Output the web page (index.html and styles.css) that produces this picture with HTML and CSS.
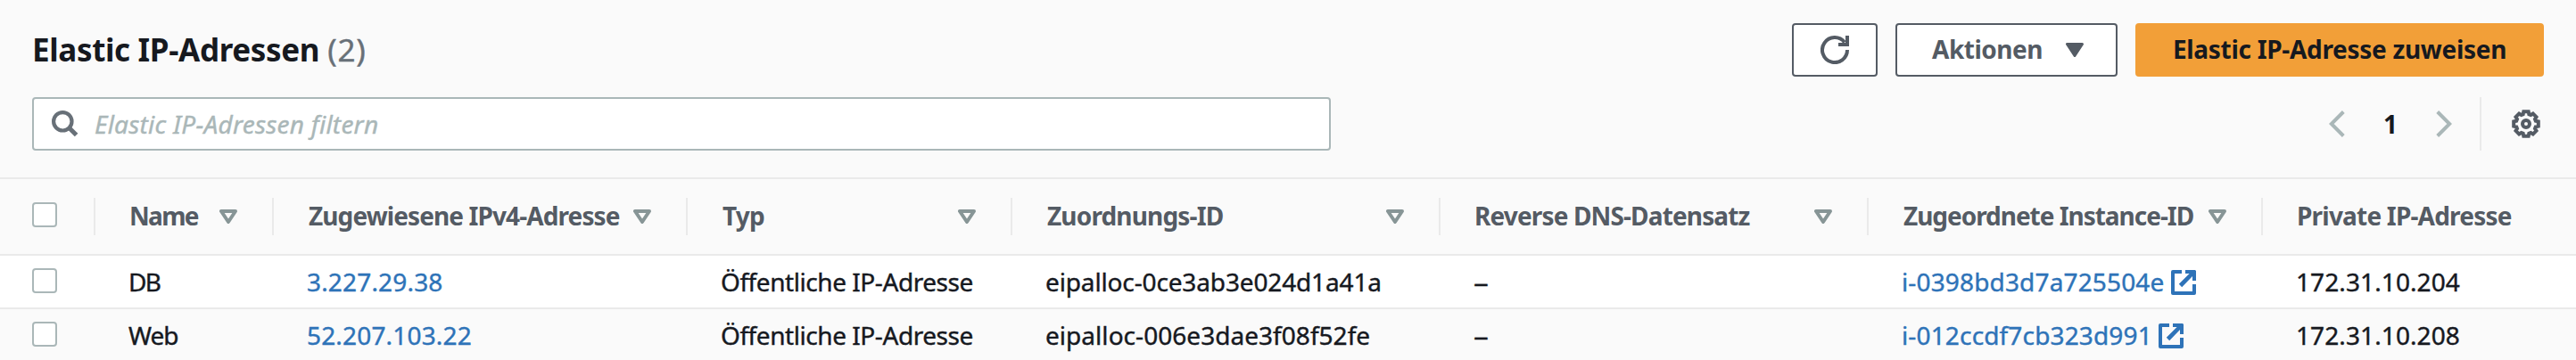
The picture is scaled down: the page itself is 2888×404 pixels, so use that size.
FILE: index.html
```html
<!DOCTYPE html>
<html lang="de">
<head>
<meta charset="utf-8">
<title>Elastic IP-Adressen</title>
<link rel="stylesheet" href="styles.css">
</head>
<body>
<svg class="defs" aria-hidden="true">
  <symbol id="sort" viewBox="0 0 20 16"><path d="M2 2H18L10 14Z" fill="none" stroke="currentColor" stroke-width="4" stroke-linejoin="round"/></symbol>
  <symbol id="external" viewBox="0 0 28 28"><path d="M12 2H2V26H26V16" fill="none" stroke="currentColor" stroke-width="4" stroke-linejoin="round"/><path d="M16 0H27L28 1V12H24V7L12.2 19.2L8.8 15.8L20.6 4H16Z" fill="currentColor"/></symbol>
</svg>
<header class="panel-head">
  <div class="title-row">
    <h1 class="title"><span class="title-text">Elastic IP-Adressen</span><span class="count">(2)</span></h1>
    <div class="actions">
      <button class="btn btn-refresh" aria-label="Aktualisieren"><svg width="32" height="32" viewBox="0 0 32 32" fill="none" stroke="currentColor" stroke-width="4"><path d="M30 16A14 14 0 1 1 27 7.4"/><path d="M30 0V10H20"/></svg></button>
      <button class="btn btn-menu"><span class="menu-text">Aktionen</span><svg width="20" height="16" viewBox="0 0 20 16"><path d="M1.5 1.5H18.5L10 14.5Z" fill="currentColor" stroke="currentColor" stroke-width="3" stroke-linejoin="round"/></svg></button>
      <button class="btn btn-primary"><span class="primary-text">Elastic IP-Adresse zuweisen</span></button>
    </div>
  </div>
  <div class="filter-row">
    <div class="search">
      <svg width="30" height="30" viewBox="0 0 30 30" fill="none" stroke="currentColor"><circle cx="12.3" cy="12.3" r="10.2" stroke-width="4.2"/><path d="M19 19L27.6 27.6" stroke-width="5"/></svg>
      <span class="placeholder">Elastic IP-Adressen filtern</span>
    </div>
    <div class="pager">
      <svg class="arrow" width="18" height="30" viewBox="0 0 18 30"><path d="M16.3 1.5L2.8 15L16.3 28.5" fill="none" stroke="currentColor" stroke-width="4"/></svg>
      <span class="page">1</span>
      <svg class="arrow" width="18" height="30" viewBox="0 0 18 30"><path d="M1.7 1.5L15.2 15L1.7 28.5" fill="none" stroke="currentColor" stroke-width="4"/></svg>
      <span class="divider"></span>
      <svg width="32" height="32" viewBox="-16 -16 32 32" fill="none" stroke="currentColor" stroke-width="4"><path d="M-3.3-10.8L-2.7-13.8L2.7-13.8L3.3-10.8L5.3-10L7.8-11.5L11.5-7.8L10-5.3L10.8-3.3L13.8-2.7L13.8 2.7L10.8 3.3L10 5.3L11.5 7.8L7.8 11.5L5.3 10L3.3 10.8L2.7 13.8L-2.7 13.8L-3.3 10.8L-5.3 10L-7.8 11.5L-11.5 7.8L-10 5.3L-10.8 3.3L-13.8 2.7L-13.8-2.7L-10.8-3.3L-10-5.3L-11.5-7.8L-7.8-11.5L-5.3-10Z"/><circle r="4"/></svg>
    </div>
  </div>
</header>
<main class="table">
  <div class="row head">
    <div class="select"><span class="check"></span></div>
    <div class="th"><span class="h-name">Name</span><svg class="sort"><use href="#sort"/></svg></div>
    <div class="th"><span class="h-ipv4">Zugewiesene IPv4-Adresse</span><svg class="sort"><use href="#sort"/></svg></div>
    <div class="th"><span class="h-type">Typ</span><svg class="sort"><use href="#sort"/></svg></div>
    <div class="th"><span class="h-alloc">Zuordnungs-ID</span><svg class="sort"><use href="#sort"/></svg></div>
    <div class="th"><span class="h-dns">Reverse DNS-Datensatz</span><svg class="sort"><use href="#sort"/></svg></div>
    <div class="th"><span class="h-inst">Zugeordnete Instance-ID</span><svg class="sort"><use href="#sort"/></svg></div>
    <div class="th"><span class="h-priv">Private IP-Adresse</span></div>
  </div>
  <div class="row">
    <div class="select"><span class="check"></span></div>
    <div class="td c-name">DB</div>
    <div class="td c-ip"><a class="link">3.227.29.38</a></div>
    <div class="td c-type">Öffentliche IP-Adresse</div>
    <div class="td c-alloc">eipalloc-0ce3ab3e024d1a41a</div>
    <div class="td"><span class="dash">–</span></div>
    <div class="td c-inst"><a class="link">i-0398bd3d7a725504e</a><svg class="external"><use href="#external"/></svg></div>
    <div class="td c-priv">172.31.10.204</div>
  </div>
  <div class="row alt">
    <div class="select"><span class="check"></span></div>
    <div class="td c-name-b">Web</div>
    <div class="td c-ip"><a class="link">52.207.103.22</a></div>
    <div class="td c-type">Öffentliche IP-Adresse</div>
    <div class="td c-alloc-b">eipalloc-006e3dae3f08f52fe</div>
    <div class="td"><span class="dash">–</span></div>
    <div class="td c-inst c-inst-b"><a class="link">i-012ccdf7cb323d991</a><svg class="external"><use href="#external"/></svg></div>
    <div class="td c-priv">172.31.10.208</div>
  </div>
</main>
</body>
</html>
```
FILE: styles.css
```css
* { box-sizing: border-box; }
body {
  margin: 0;
  height: 404px;
  overflow: hidden;
  background: #fafafa;
  color: #16191f;
  font: 28px/58px "Noto Sans", "Open Sans", sans-serif;
  white-space: nowrap;
}
svg { display: block; flex: none; }
.defs { display: none; }

.panel-head {
  display: flex;
  flex-direction: column;
  gap: 23px;
  height: 201px;
  padding: 26px 36px 0;
  border-bottom: 2px solid #eaeaea;
}
.title-row, .filter-row { display: flex; justify-content: space-between; height: 60px; }
.title { margin: 0; display: flex; gap: 9px; font-size: 35px; line-height: 59px; }
.title-text { letter-spacing: -.35px; }
.count { font-weight: 400; color: #687078; letter-spacing: .8px; -webkit-text-stroke: .4px; }

.actions { display: flex; gap: 20px; }
.btn {
  display: flex;
  align-items: center;
  justify-content: center;
  height: 60px;
  padding: 0;
  border: 2px solid #545b64;
  border-radius: 4px;
  background: #fff;
  color: #545b64;
  font: bold 28px/54px "Noto Sans", "Open Sans", sans-serif;
}
.btn-refresh { width: 96px; }
.btn-menu { width: 249px; gap: 26px; padding-left: 3px; }
.btn-primary { width: 458px; border-color: #f29f38; background: #f29f38; color: #16191f; }
.menu-text { letter-spacing: -.5px; padding-bottom: 2px; }
.primary-text { letter-spacing: -.3px; padding-bottom: 2px; }

.search {
  display: flex;
  align-items: center;
  gap: 18px;
  width: 1456px;
  padding-left: 20px;
  border: 2px solid #aab7b8;
  border-radius: 4px;
  background: #fff;
  color: #687078;
}
.placeholder { font-style: italic; color: #aab7b8; letter-spacing: .24px; line-height: 56px; -webkit-text-stroke: .4px; }
.pager { display: flex; align-items: center; margin-right: 4px; color: #545b64; }
.arrow { color: #aab7b8; }
.page { width: 102px; text-align: center; font-weight: 700; color: #16191f; }
.divider { width: 2px; height: 60px; margin: 0 34px 0 31px; background: #eaeaea; }

.row {
  display: grid;
  grid-template-columns: 105px 200px 464px 364px 480px 480px 442px 353px;
  height: 60px;
  background: #fff;
  border-bottom: 2px solid #eaeaea;
}
.row.head { height: 86px; padding-top: 12px; background: transparent; }
.row.alt { background: #fafafa; border-bottom: 0; }
.select { padding: 14px 0 0 36px; }
.check { display: block; width: 28px; height: 28px; border: 2px solid #aab7b8; border-radius: 4px; background: #fff; }
.th {
  display: flex;
  align-items: center;
  justify-content: space-between;
  height: 42px;
  margin-top: 9px;
  padding: 0 39px 0 38px;
  border-left: 2px solid #eaeaea;
  font-weight: 700;
  line-height: 40px;
  color: #545b64;
}
.th span { padding-bottom: 2px; }
.h-name { letter-spacing: -1.7px; }
.h-ipv4 { letter-spacing: -.9px; padding-left: 1px; }
.h-type { letter-spacing: -.8px; padding-left: 1px; }
.h-alloc { letter-spacing: -.84px; padding-left: 1px; }
.h-dns { letter-spacing: -.86px; }
.h-inst { letter-spacing: -1.03px; padding-left: 1px; }
.h-priv { letter-spacing: -.8px; }
.sort { width: 20px; height: 16px; color: #879596; }

.td { display: flex; padding-left: 39px; line-height: 58px; -webkit-text-stroke: .4px; }
.link { color: #2e73b8; }
.c-name { letter-spacing: -1.6px; }
.c-name-b { letter-spacing: -1px; }
.c-ip { letter-spacing: .17px; }
.c-type { letter-spacing: -.44px; }
.c-alloc { letter-spacing: -.14px; }
.c-alloc-b { letter-spacing: .04px; }
.c-inst { gap: 8px; letter-spacing: .15px; }
.c-inst-b { gap: 7px; }
.c-priv { letter-spacing: .1px; }
.dash { transform: scaleX(1.2); transform-origin: left; }
.external { width: 28px; height: 28px; margin-top: 16px; color: #2e73b8; }
```
